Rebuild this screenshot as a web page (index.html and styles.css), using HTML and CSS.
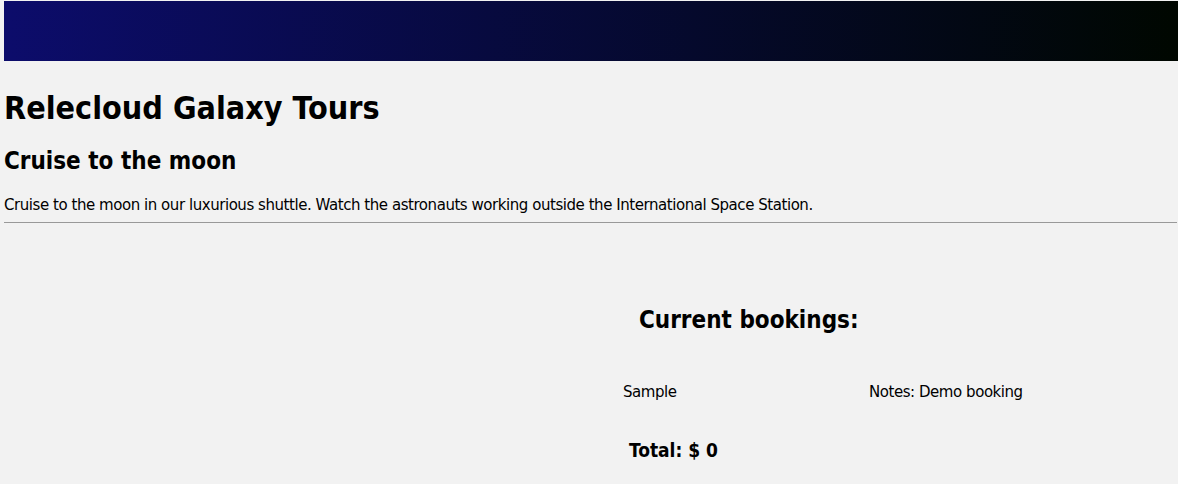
FILE: index.html
```html
<!DOCTYPE html>
<html>
<head>
<meta charset="utf-8">
<link rel="stylesheet" href="styles.css">
</head>
<body>
<header class="banner"></header>
<main class="page">
  <h1 class="title">Relecloud Galaxy Tours</h1>
  <h2 class="subtitle">Cruise to the moon</h2>
  <p class="desc">Cruise to the moon in our luxurious shuttle. Watch the astronauts working outside the International Space Station.</p>
  <hr class="rule">
  <section class="layout">
    <div class="left"></div>
    <div class="right">
      <h2 class="bookings-title">Current bookings:</h2>
      <div class="booking-row">
        <span class="booking-name">Sample</span>
        <span class="booking-notes">Notes: Demo booking</span>
      </div>
      <div class="total">Total: $ 0</div>
    </div>
  </section>
</main>
</body>
</html>
```
FILE: styles.css
```css
html, body {
  margin: 0;
  padding: 0;
  background: #f2f2f2;
}
body {
  padding: 1px 0 0 4px;
  font-family: "DejaVu Sans", Verdana, sans-serif;
  color: #000;
}
.banner {
  height: 60px;
  background: linear-gradient(to right, #0c0c6b, #000700);
}
.title, .subtitle, .bookings-title, .total {
  font-family: "DejaVu Sans Condensed", "DejaVu Sans", sans-serif;
}
.title {
  font-size: 32px;
  margin: 28px 0 0 0;
  line-height: 38px;
}
.subtitle {
  font-size: 24px;
  margin: 20px 0 0 0;
  line-height: 29px;
}
.desc {
  font-size: 15px;
  letter-spacing: -0.45px;
  margin: 20px 0 0 0;
  line-height: 18px;
}
.rule {
  margin: 8px 1px 0 0;
  border: 0;
  border-top: 1px solid #999;
  height: 0;
}
.layout {
  display: grid;
  grid-template-columns: 595px 1fr;
}
.right {
  padding-top: 83px;
}
.bookings-title {
  font-size: 24px;
  margin: 0 0 0 40px;
  line-height: 29px;
}
.booking-row {
  display: grid;
  grid-template-columns: 246px 1fr;
  margin: 48px 0 0 24px;
  font-size: 15px;
  letter-spacing: -0.45px;
  line-height: 18px;
}
.total {
  font-weight: bold;
  font-size: 19px;
  margin: 38px 0 0 30px;
  line-height: 22px;
}
```
